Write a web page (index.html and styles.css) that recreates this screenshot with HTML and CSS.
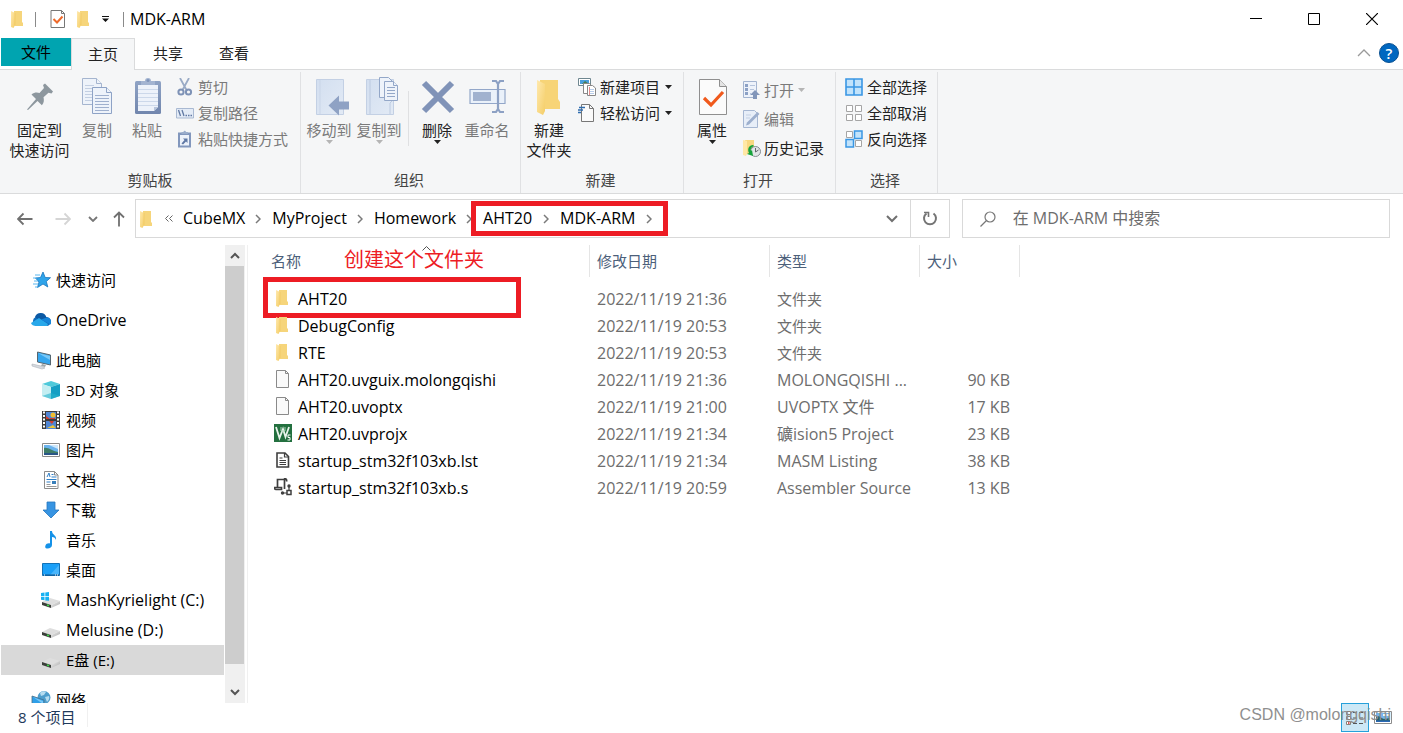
FILE: index.html
```html
<!DOCTYPE html>
<html lang="zh-CN">
<head>
<meta charset="utf-8">
<title>MDK-ARM</title>
<link rel="stylesheet" href="styles.css">
</head>
<body>
<svg class="defs" aria-hidden="true">
  <defs>
    <linearGradient id="g-drive" x1="0" y1="0" x2="1" y2="1"><stop offset="0" stop-color="#f2f2f2"/><stop offset="1" stop-color="#a9a9a9"/></linearGradient>
    <linearGradient id="g-clip" x1="0" y1="0" x2="0" y2="1"><stop offset="0" stop-color="#8fa3c5"/><stop offset="1" stop-color="#7186ad"/></linearGradient>
    <linearGradient id="g-fold" x1="0" y1="0" x2="1" y2="1"><stop offset="0" stop-color="#ffe9ae"/><stop offset="1" stop-color="#f4cd66"/></linearGradient>
    <linearGradient id="g-book" x1="0" y1="0" x2="1" y2="1"><stop offset="0" stop-color="#d3dff0"/><stop offset="1" stop-color="#e2eaf5"/></linearGradient>
    <symbol id="folder" viewBox="0 0 18 18"><path d="M5 1h8v11l1 1v3H5z" fill="#f6d57b"/><path d="M2 1l4 2v12l-1.500 3L2 17z" fill="url(#g-fold)"/><path d="M6 3v12" stroke="#f0c75d" stroke-width=".6"/></symbol>
    <symbol id="sheet" viewBox="0 0 18 18"><path d="M2.500.500h9l3 3v14h-12z" fill="#fafafa" stroke="#8a8a8a"/><path d="M11.500.500v3h3" fill="none" stroke="#8a8a8a"/></symbol>
    <symbol id="drive" viewBox="0 0 20 12"><path d="M1 5l8-4 10 3-9 4z" fill="#dedede"/><path d="M1 5l9 3v3L1 8z" fill="#3b3f3b"/><path d="M10 8l9-4v3l-9 4z" fill="url(#g-drive)"/><path d="M6 8l2 .7" stroke="#3fd64a" stroke-width="1.500"/></symbol>
    <symbol id="tri" viewBox="0 0 7 4"><path d="M0 0h7L3.500 4z" fill="currentColor"/></symbol>
    <symbol id="chev" viewBox="0 0 6 10"><path d="M1 1l4 4-4 4" fill="none" stroke="#7a7a7a" stroke-width="1.500"/></symbol>
  </defs>
</svg>

<div class="window">
  <header class="titlebar">
    <svg class="i18" viewBox="0 0 18 18"><use href="#folder"/></svg>
    <span class="bar"></span>
    <svg class="i18 qa-check" viewBox="0 0 18 18"><path d="M2 .5h10.500l3 3V17.500H2z" fill="#fff" stroke="#777"/><path d="M12.500.5v3h3" fill="none" stroke="#777"/><path d="M4.500 9l3.500 3.500 5.500-6" fill="none" stroke="#ee6a2b" stroke-width="2"/></svg>
    <svg class="i18 qa-folder" viewBox="0 0 18 18"><use href="#folder"/></svg>
    <button class="plain qa-more" aria-label="自定义快速访问工具栏"><svg width="7" height="6" viewBox="0 0 7 6"><path d="M0 0h7v1H0zM0 2.500h7L3.500 6z" fill="#111"/></svg></button>
    <span class="bar"></span>
    <h1 class="title">MDK-ARM</h1>
    <div class="wincontrols">
      <button class="plain" aria-label="最小化"><svg width="12" height="12" viewBox="0 0 12 12"><path d="M0 5.500h12" stroke="#000"/></svg></button>
      <button class="plain" aria-label="最大化"><svg width="12" height="12" viewBox="0 0 12 12"><path d="M.5.500h11v11H.5z" fill="none" stroke="#000"/></svg></button>
      <button class="plain" aria-label="关闭"><svg width="12" height="12" viewBox="0 0 12 12"><path d="M0 0l12 12M12 0L0 12" stroke="#000" stroke-width="1.200"/></svg></button>
    </div>
  </header>

  <div class="tabs">
    <button class="tab file">文件</button>
    <button class="tab active">主页</button>
    <button class="tab">共享</button>
    <button class="tab">查看</button>
    <div class="tabs-right">
      <button class="plain" aria-label="最小化功能区"><svg width="14" height="8" viewBox="0 0 14 8"><path d="M1 7l6-6 6 6" fill="none" stroke="#9a9a9a" stroke-width="1.300"/></svg></button>
      <button class="plain help" aria-label="帮助">?</button>
    </div>
  </div>

  <div class="ribbon">
    <section class="group g-clip">
      <div class="tools">
        <button class="big w-pin"><svg width="40" height="40" viewBox="0 0 40 40"><path transform="translate(-1 1)" d="M8 31.500l9-10.500-4.500-4.500c3-2.500 6-2 8-1.500l4.500-5-1-3 2-1.500 8 8-1.500 2-3-.8-5 4.600c.6 2.500.8 5.500-1.600 8L18.500 23 9 32z" fill="#8d979e"/></svg><span>固定到<br>快速访问</span></button>
        <button class="big off w-copy"><svg width="40" height="40" viewBox="0 0 40 40"><g fill="#eef3fa" stroke="#a5b5cf"><path d="M5.500 1.500h14l5 5v21h-19z"/><path d="M19.500 1.500v5h5" /><path d="M8 8.500h9M8 11.500h9M8 14.500h9M8 17.500h9M8 20.500h9M8 23.500h9" stroke="#c3cfe2"/><path d="M15.500 10.500h14l5 5v21h-19z" stroke="#8ea3c6"/><path d="M29.500 10.500v5h5" stroke="#8ea3c6"/><path d="M18 18.500h14M18 21.500h14M18 24.500h14M18 27.500h14M18 30.500h14M18 33.500h14" stroke="#9fb0ce"/></g></svg><span>复制</span></button>
        <button class="big off w-paste"><svg width="40" height="40" viewBox="0 0 40 40"><rect x="8" y="4" width="26" height="33" rx="1.500" fill="url(#g-clip)"/><path d="M11 8h20v22l-4 4H11z" fill="#edf2fa"/><path d="M11 12.500h20M11 16.500h20M11 20.500h20M11 24.500h20M11 28.500h20" stroke="#ccd8ea"/><path d="M27 34v-4h4z" fill="#b7c5dc"/><path d="M14 8V4h4a3 3 0 0 1 6 0h4v4z" fill="#a3b4d1"/><circle cx="21" cy="3.500" r="1.500" fill="#7f94b9"/></svg><span>粘贴</span></button>
        <div class="list">
          <button class="small off"><svg class="i18" viewBox="0 0 18 18"><path d="M4 0l6.500 12M13 0L6.500 12" stroke="#9aabc6" stroke-width="1.800"/><circle cx="5" cy="14" r="2.600" fill="none" stroke="#7e92b6" stroke-width="2"/><circle cx="12.500" cy="14" r="2.600" fill="none" stroke="#7e92b6" stroke-width="2"/></svg>剪切</button>
          <button class="small off"><svg class="i18" viewBox="0 0 18 18"><path d="M.5 4.500h17v9.500H.5z" fill="#e3ebf6" stroke="#a9b9d2"/><path d="M2.500 6l2 6M6 6l2 6M9.500 11.500h1.500M12 11.500h1.500M14.500 11.500h1.500" stroke="#6179a3" stroke-width="1.300"/></svg>复制路径</button>
          <button class="small off"><svg class="i18" viewBox="0 0 18 18"><rect x="2" y="2.500" width="13" height="15" fill="#8297bd"/><path d="M4 5h9v10.500H4z" fill="#edf2fa"/><path d="M5.500 4V2h2a1.200 1.200 0 0 1 2.400 0h2v2z" fill="#9aadcb"/><path d="M5.500 13.500l3-3.500-1.500-1.500h4.500v4.500L10 11.500l-3 3z" fill="#5f78a5"/></svg>粘贴快捷方式</button>
        </div>
      </div>
      <h2>剪贴板</h2>
    </section>
    <section class="group g-org">
      <div class="tools">
        <button class="big off"><svg width="40" height="40" viewBox="0 0 40 40"><path d="M7.500 2.500h27v35h-27z" fill="url(#g-book)" stroke="#c3d0e4"/><path d="M11 3v34" stroke="#c9d5e8"/><path d="M19.500 28.500L30 18.500v6h10v8H30v6z" fill="#8fa2c4"/></svg><span>移动到</span><svg class="tri"><use href="#tri"/></svg></button>
        <button class="big off"><svg width="40" height="40" viewBox="0 0 40 40"><path d="M7.500 2.500h27v35h-27z" fill="url(#g-book)" stroke="#c3d0e4"/><path d="M11 3v34M31 37V26l3-3" stroke="#bccae0" fill="none"/><g fill="#eef3fa" stroke="#93a7c8"><path d="M20.500.5h9l4 4v16h-13z"/><path d="M25.500 4.500h9l4 4v15h-13z"/><path d="M34.500 4.500v4h4M28 10.500h8M28 13.500h8M28 16.500h8M28 19.500h8"/></g></svg><span>复制到</span><svg class="tri"><use href="#tri"/></svg></button>
        <span class="rule"></span>
        <button class="big"><svg width="40" height="40" viewBox="0 0 40 40"><path d="M7 7l28 28M35 7L7 35" transform="translate(0 -1)" stroke="#8093b8" stroke-width="6"/></svg><span>删除</span><svg class="tri"><use href="#tri"/></svg></button>
        <button class="big off"><svg width="40" height="40" viewBox="0 0 40 40"><path d="M3 12.500h35v14H3z" fill="#eaf1fa" stroke="#93a7c9" stroke-width="1.200"/><path d="M6 15h18v9H6z" fill="#a1b2cf"/><path d="M25 4h4l2 3 2-3h4M25 35h4l2-3 2 3h4M31 6v27" fill="none" stroke="#8da1c4" stroke-width="2.200"/></svg><span>重命名</span></button>
      </div>
      <h2>组织</h2>
    </section>
    <section class="group g-new">
      <div class="tools">
        <button class="big"><svg width="40" height="40" viewBox="0 0 40 40"><path d="M11 3h18v19l2 3v7H11z" fill="#f7d477"/><path d="M8 3l8 4v27l-2 4-6-3z" fill="url(#g-fold)"/></svg><span>新建<br>文件夹</span></button>
        <div class="list">
          <button class="small"><svg class="i18" viewBox="0 0 18 18"><path d="M.5.500h12v7H.5z" fill="#fff" stroke="#6f8790"/><path d="M2 2h9v4H2z" fill="#4b9edc"/><path d="M4 6l3-3 4 3z" fill="#447c53"/><path d="M5.500 5.500h6l2 2v8h-8z" fill="#fff" stroke="#888"/><path d="M9.500 7.500h5l3 2.500v7.500h-8z" fill="#fff" stroke="#888"/><path d="M11 11.500h5M11 13.500h5M11 15.500h5" stroke="#b8cdea"/><path d="M11.500 9v8" stroke="#e58b8b"/></svg>新建项目<svg class="tri"><use href="#tri"/></svg></button>
          <button class="small"><svg class="i18" viewBox="0 0 18 18"><path d="M3.500.5h8l4 4v13h-12z" fill="#fafafa" stroke="#777"/><path d="M11.500.5v4h4" fill="none" stroke="#777"/><path d="M1 3.500h6M0 6h5M0 8.500h3" stroke="#2f6cae" stroke-width="1.300"/></svg>轻松访问<svg class="tri"><use href="#tri"/></svg></button>
        </div>
      </div>
      <h2>新建</h2>
    </section>
    <section class="group g-open">
      <div class="tools">
        <button class="big w-prop"><svg width="40" height="40" viewBox="0 0 40 40"><path d="M7.500 2.500h20l7 7v28h-27z" fill="#fbfbfb" stroke="#8f8f8f"/><path d="M27.500 2.500v7h7" fill="#e4e4e4" stroke="#8f8f8f"/><path d="M12 21l7 7 12-13" fill="none" stroke="#f0591c" stroke-width="3.200"/></svg><span>属性</span><svg class="tri"><use href="#tri"/></svg></button>
        <div class="list loose">
          <button class="small off"><svg class="i18" viewBox="0 0 18 18"><path d="M.5.500h13v16H.5z" fill="#edf2fa" stroke="#a3b4d0"/><path d="M2 3h3v3H2zM2 7h3v3H2zM2 11h3v3H2z" fill="#8ca1c5"/><path d="M7 4.500h5M7 8.500h4M7 12.500h1" stroke="#b5c4dc"/><path d="M12 9l5 5h-3v4h-4v-4H7z" fill="#8296ba"/></svg>打开<svg class="tri"><use href="#tri"/></svg></button>
          <button class="small off"><svg class="i18" viewBox="0 0 18 18"><path d="M.5.500h11l3 3v14H.5z" fill="#e7eef8" stroke="#a6b7d2"/><path d="M3 5h5M3 8h4" stroke="#c3d0e3"/><path d="M3 15.500l1-3L14.500 2l2 2L6 14.500z" fill="#9cafcd"/></svg>编辑</button>
          <button class="small"><svg class="i18" viewBox="0 0 18 18"><path d="M2 1h9v14H4z" fill="#f8d880"/><path d="M0 1l4 1v13l-1 2-3-1z" fill="#ffe8a6"/><circle cx="12.500" cy="12.500" r="5" fill="#e1e5e7" stroke="#858c91"/><path d="M12.500 9v4l3-2" fill="none" stroke="#61686c"/><path d="M10 6c-4 0-6 4-4 8l-2 1 6 2-1-6-1 1c-1-2 0-4 3-5z" fill="#16a33b"/></svg>历史记录</button>
        </div>
      </div>
      <h2>打开</h2>
    </section>
    <section class="group g-sel">
      <div class="tools">
        <div class="list">
          <button class="small"><svg class="i18" viewBox="0 0 18 18"><path d="M1 1h16v16H1zM9 1v16M1 9h16" fill="#c2e3fb" stroke="#3a97e4" stroke-width="1.600"/></svg>全部选择</button>
          <button class="small"><svg class="i18" viewBox="0 0 18 18"><path d="M1.500 1.500h6v6h-6zM10.500 1.500h6v6h-6zM1.500 10.500h6v6h-6zM10.500 10.500h6v6h-6z" fill="#fff" stroke="#a5a5a5"/></svg>全部取消</button>
          <button class="small"><svg class="i18" viewBox="0 0 18 18"><path d="M1.500 1.500h6v6h-6zM10.500 10.500h6v6h-6z" fill="#fff" stroke="#a5a5a5"/><path d="M9.500 1h7.500v7.500H9.500zM1 9.500h7.500V17H1z" fill="#c2e3fb" stroke="#3a97e4" stroke-width="1.500"/></svg>反向选择</button>
        </div>
      </div>
      <h2>选择</h2>
    </section>
  </div>

  <div class="nav">
    <div class="arrows">
      <button class="plain" aria-label="后退"><svg width="16" height="14" viewBox="0 0 16 14"><path d="M6.500 1.500L1 7l5.500 5.500M1 7H15.500" fill="none" stroke="#707070" stroke-width="1.800"/></svg></button>
      <button class="plain fwd" aria-label="前进"><svg width="16" height="14" viewBox="0 0 16 14"><path d="M9.500 1.500L15 7l-5.500 5.500M15 7H.5" fill="none" stroke="#d5d5d5" stroke-width="1.800"/></svg></button>
      <button class="plain" aria-label="最近浏览的位置"><svg width="10" height="6" viewBox="0 0 10 6"><path d="M1 1l4 4 4-4" fill="none" stroke="#767676" stroke-width="1.800"/></svg></button>
      <button class="plain" aria-label="上移"><svg width="12" height="16" viewBox="0 0 12 16"><path d="M1 6.500l5-5 5 5M6 1.500V15.500" fill="none" stroke="#707070" stroke-width="1.800"/></svg></button>
    </div>
    <div class="address">
      <svg class="i18" viewBox="0 0 18 18"><use href="#folder"/></svg>
      <svg class="dbl" width="8" height="7" viewBox="0 0 8 7"><path d="M3.500.5l-3 3 3 3M7.500.5l-3 3 3 3" fill="none" stroke="#666"/></svg>
      <a href="#">CubeMX</a><svg class="chev"><use href="#chev"/></svg>
      <a href="#">MyProject</a><svg class="chev"><use href="#chev"/></svg>
      <a href="#">Homework</a><svg class="chev"><use href="#chev"/></svg>
      <span class="marked"><a href="#">AHT20</a><svg class="chev"><use href="#chev"/></svg><a href="#">MDK-ARM</a><svg class="chev"><use href="#chev"/></svg></span>
      <button class="plain drop" aria-label="以前的位置"><svg width="12" height="8" viewBox="0 0 12 8"><path d="M1 1l5 5 5-5" fill="none" stroke="#707070" stroke-width="2"/></svg></button>
      <button class="plain refresh" aria-label="刷新"><svg width="16" height="16" viewBox="0 0 16 16"><path d="M11.500 2.500a6 6 0 1 1-7 0" fill="none" stroke="#747474" stroke-width="2"/><path d="M2 1.500h4.500V6" fill="none" stroke="#747474" stroke-width="1.600"/></svg></button>
    </div>
    <label class="search">
      <svg width="16" height="16" viewBox="0 0 16 16"><circle cx="10" cy="6" r="5" fill="none" stroke="#777" stroke-width="1.200"/><path d="M6.500 9.500L.5 15.500" stroke="#777" stroke-width="1.200"/></svg>
      <input type="text" placeholder="在 MDK-ARM 中搜索" aria-label="搜索">
    </label>
  </div>

  <main class="body">
    <nav class="side">
      <a class="top" href="#"><svg viewBox="0 0 20 20"><path d="M12 2l2.200 5.500 5.300.2-4.200 3.700 1.500 5.600L12 14l-5.500 3.500L8 12 4.500 8l5-.5z" fill="#2fa4ea" stroke="#1674bd" stroke-width=".8"/><path d="M4 5h5M2 8h4M3 11h4M2 14h5M4 17h3" stroke="#58b6ef"/></svg>快速访问</a>
      <a class="top" href="#"><svg viewBox="0 0 20 20"><path d="M5 16a5 5 0 0 1-.5-9A6 6 0 0 1 15 7a4.500 4.500 0 0 1 1 9z" fill="#0f6cbd"/><path d="M4 7a6 6 0 0 1 11.500.5L9 11z" fill="#0c59a4"/><path d="M0 13l8-5 9 6-1 2H5c-2.500 0-4.500-1-5-3z" fill="#28a8ea"/><path d="M10 9.500l6-2a4.500 4.500 0 0 1 3.500 7z" fill="#1685d9"/></svg><span class="latin">OneDrive</span></a>
      <a class="top pc" href="#"><svg viewBox="0 0 20 20"><path d="M6.500 2l13 3v10l-13-3z" fill="#35a6ee" stroke="#55656f"/><path d="M7 3l12 7V6z" fill="#79c8f7"/><path d="M11 14l4 1-1 2-4-1z" fill="#9fa6aa"/><path d="M1 14l9 2 4 2-3 1-10-3z" fill="#d6dae0" stroke="#adb4bb" stroke-width=".6"/></svg>此电脑</a>
      <a href="#"><svg viewBox="0 0 20 20"><path d="M1 4l9-3 9 3-9 3z" fill="#4fc9da"/><path d="M1 4l9 3v12l-9-3z" fill="#c4eef2"/><path d="M19 4l-9 3v12l9-3z" fill="#169fc4"/><path d="M10 13l9 3-9 3-9-3z" fill="#28b4cd" opacity=".6"/></svg>3D 对象</a>
      <a href="#"><svg viewBox="0 0 20 20"><path d="M1 1h18v18H1z" fill="#3c3c3c"/><path d="M5 2h10v7H5zM5 11h10v8H5z" fill="#4f86d5"/><circle cx="12" cy="5" r="2.500" fill="#f1bd2e"/><path d="M5 6l4 3H5zM9 8h5v1H9zM8 11h5l-2 3z" fill="#d43c2d"/><path d="M6 18h9l-3-3z" fill="#e8c43a"/><path d="M3 1.500v17M17 1.500v17" stroke="#fff" stroke-width="2" stroke-dasharray="2 1.500"/></svg>视频</a>
      <a href="#"><svg viewBox="0 0 20 20"><path d="M1.500 3.500h17v13h-17z" fill="#fff" stroke="#8b8b8b"/><path d="M3 5h14v10H3z" fill="#6ab3ee"/><path d="M8 5h9v4z" fill="#cce6fa"/><path d="M3 8c4-1 8 3 14 4v3H3z" fill="#3f7d68"/><path d="M3 13h14v2H3z" fill="#2a5688"/></svg>图片</a>
      <a href="#"><svg viewBox="0 0 20 20"><path d="M3.500 1.500h10l3.500 3.500v13.500H3.500z" fill="#fff" stroke="#8b8b8b"/><path d="M13.500 1.500V5H17" fill="none" stroke="#8b8b8b"/><path d="M6 7l2-4 1 4M10.500 4.500h2M10.500 7h5M5.500 9.500h10M5.500 12h4" fill="none" stroke="#2f7fc7"/><path d="M5.500 14.500h4M5.500 16.500h10" stroke="#999"/><path d="M11 11h4v3h-4z" fill="#397fba"/></svg>文档</a>
      <a href="#"><svg viewBox="0 0 20 20"><path d="M6 2h8v8h4l-8 8-8-8h4z" fill="#3794e2" stroke="#2676bf" stroke-width=".8"/></svg>下载</a>
      <a href="#"><svg viewBox="0 0 20 20"><path d="M9 1h2c0 4 5 4 4 9-.6-2-2-3-4-3v8c0 2-2 3.500-4.500 3.500S4 17 4.500 15.500 7 13 9 13.500z" fill="#1592e8"/></svg>音乐</a>
      <a href="#"><svg viewBox="0 0 20 20"><path d="M1.500 3.500h17v12h-17z" fill="#1ba0f8" stroke="#1272b8"/><path d="M9 15l9-10v10z" fill="#49b5fb"/><path d="M2 15h16" stroke="#0c548f"/><path d="M3 15h1M14 15h1M16 15h1" stroke="#fff"/></svg>桌面</a>
      <a href="#"><svg viewBox="0 0 20 20"><use href="#drive" y="7" width="20" height="12"/><path d="M0 3l3.500-.5V6H0zM4.300 2.400L8 2v4H4.300zM0 6.800h3.500v3.500L0 9.800zM4.300 6.800H8v4l-3.700-.4z" fill="#17b1f2"/></svg><span class="latin">MashKyrielight (C:)</span></a>
      <a href="#"><svg viewBox="0 0 20 20"><use href="#drive" y="7" width="20" height="12"/></svg><span class="latin">Melusine (D:)</span></a>
      <a class="current" href="#"><svg viewBox="0 0 20 20"><use href="#drive" y="7" width="20" height="12"/></svg>E盘 (E:)</a>
      <a class="top net" href="#"><svg viewBox="0 0 20 20"><circle cx="13" cy="7.500" r="6.500" fill="#4d9dcc"/><path d="M9 3c2-2 5-2 6-1l-2 3-3 1zM14 7l4-1c1 3-1 5-2 6z" fill="#b5dcf0"/><path d="M1 6l12 4v9L1 16z" fill="#2f9fe8" stroke="#4c6f86" stroke-width=".8"/><path d="M2 7l10 4v3z" fill="#79c8f7"/></svg>网络</a>
    </nav>
    <div class="scroll">
      <button class="plain" aria-label="向上滚动"><svg width="10" height="7" viewBox="0 0 10 7"><path d="M1 6l4-4 4 4" fill="none" stroke="#555" stroke-width="2"/></svg></button>
      <div class="thumb"></div>
      <button class="plain down" aria-label="向下滚动"><svg width="10" height="7" viewBox="0 0 10 7"><path d="M1 1l4 4 4-4" fill="none" stroke="#555" stroke-width="2"/></svg></button>
    </div>
    <div class="files">
      <table>
        <colgroup><col class="c-name"><col class="c-date"><col class="c-type"><col class="c-size"></colgroup>
        <thead><tr>
          <th class="h-name"><div>名称</div><svg class="sort" width="9" height="5" viewBox="0 0 9 5"><path d="M.5 4.500l4-4 4 4" fill="none" stroke="#555"/></svg><span class="note">创建这个文件夹</span></th>
          <th><div>修改日期</div></th><th><div>类型</div></th><th><div>大小</div></th>
        </tr></thead>
        <tbody>
          <tr><td class="picked"><svg class="i18" viewBox="0 0 18 18"><use href="#folder"/></svg>AHT20</td><td>2022/11/19 21:36</td><td class="cjk">文件夹</td><td></td></tr>
          <tr><td><svg class="i18" viewBox="0 0 18 18"><use href="#folder"/></svg>DebugConfig</td><td>2022/11/19 20:53</td><td class="cjk">文件夹</td><td></td></tr>
          <tr><td><svg class="i18" viewBox="0 0 18 18"><use href="#folder"/></svg>RTE</td><td>2022/11/19 20:53</td><td class="cjk">文件夹</td><td></td></tr>
          <tr><td><svg class="i18" viewBox="0 0 18 18"><use href="#sheet"/></svg>AHT20.uvguix.molongqishi</td><td>2022/11/19 21:36</td><td>MOLONGQISHI ...</td><td>90 KB</td></tr>
          <tr><td><svg class="i18" viewBox="0 0 18 18"><use href="#sheet"/></svg>AHT20.uvoptx</td><td>2022/11/19 21:00</td><td>UVOPTX 文件</td><td>17 KB</td></tr>
          <tr><td><svg class="i18" viewBox="0 0 18 18"><path d="M0 0h18v18H0z" fill="#23703f"/><path d="M2 3l3.500 11L9 5l2.500 8L15 3" fill="none" stroke="#e9f4ec" stroke-width="1.800"/><path d="M7 3v4h4V3" fill="none" stroke="#a9d2b6"/><path d="M16.500 11H14v2.500h2V16h-2.500" fill="none" stroke="#fff"/></svg>AHT20.uvprojx</td><td>2022/11/19 21:34</td><td>礦ision5 Project</td><td>23 KB</td></tr>
          <tr><td><svg class="i18" viewBox="0 0 18 18"><path d="M3 2h8l3.500 3.500V16H3z" fill="#fff" stroke="#3f3f3f" stroke-width="1.600"/><path d="M10.500 2v4h4M5.500 7h3M5.500 9.500h6.500M5.500 11.500h6.500M5.500 13.500h6.500" fill="none" stroke="#3f3f3f" stroke-width="1.200"/></svg>startup_stm32f103xb.lst</td><td>2022/11/19 21:34</td><td>MASM Listing</td><td>38 KB</td></tr>
          <tr><td><svg class="i18" viewBox="0 0 18 18"><path d="M3.500 10V1.500h8M10.500 1.500V11M0 9.500h7.500v2H2c-1 0-1.500-1-1.500-2M10 1c2-1 3 1 2.500 2.500" fill="none" stroke="#3f3f3f" stroke-width="1.700"/><path d="M15 7v5M9 15h4" stroke="#3f3f3f" stroke-width="1.200"/><path d="M13 12.500h4v4h-4z" fill="#fff" stroke="#3f3f3f" stroke-width="1.500"/><circle cx="15" cy="8" r="1.700" fill="#3f3f3f"/><circle cx="8.500" cy="15" r="1.700" fill="#3f3f3f"/></svg>startup_stm32f103xb.s</td><td>2022/11/19 20:59</td><td>Assembler Source</td><td>13 KB</td></tr>
        </tbody>
      </table>
    </div>
  </main>

  <footer class="status">
    <span class="count">8 个项目</span>
    <div class="views">
      <button class="plain on" aria-label="详细信息"><svg width="18" height="16" viewBox="0 0 18 16"><path d="M.5 1.500h4v3h-4zM.5 6.500h4v3h-4zM.5 11.500h4v3h-4z" fill="#fff" stroke="#8b8078"/><path d="M2 13h1.500" stroke="#c22" stroke-width="1.500"/><path d="M7 2.500h4M13 2.500h4M7 8h4M13 8h4M7 13.500h4M13 13.500h4" stroke="#555"/></svg></button>
      <button class="plain" aria-label="大图标"><svg width="18" height="13" viewBox="0 0 18 13"><path d="M.5.500h17v12H.5z" fill="#fff" stroke="#8c8c8c"/><path d="M2 2h14v9H2z" fill="#76b5ec"/><path d="M9 3h6v2H9z" fill="#eaf5fd"/><path d="M2 6c4-2 4 1 8 2l6-1v4H2z" fill="#25606b"/><path d="M2 9.500h14V11H2z" fill="#2b68b5"/></svg></button>
    </div>
    <span class="mark">CSDN @molongqishi</span>
  </footer>
</div>
</body>
</html>
```
FILE: styles.css
```css
*, *::before, *::after { box-sizing: border-box; }

body {
  margin: 0;
  font-family: "Open Sans", "Noto Sans CJK SC", sans-serif;
  font-size: 15px;
  line-height: 20px;
  color: #000;
  background: #fff;
}

button, input { font: inherit; color: inherit; }
button { padding: 0; border: 0; background: none; }
a { color: inherit; text-decoration: none; }
h1, h2 { margin: 0; font-weight: 400; font-size: 15px; }
svg { flex: none; display: block; }

.defs { position: absolute; width: 0; height: 0; }
.i18 { width: 18px; height: 18px; }
.plain { display: flex; align-items: center; justify-content: center; }
.tri { width: 7px; height: 4px; }
.chev { width: 6px; height: 10px; }
.latin { font-size: 16px; }

.window { display: flex; flex-direction: column; height: 100vh; overflow: hidden; }

/* Title bar */
.titlebar { display: flex; align-items: center; height: 38px; padding-left: 9px; }
.bar { width: 1px; height: 15px; background: #8a8a8a; margin-left: 8px; }
.qa-check { margin-left: 13px; }
.qa-folder { margin-left: 8px; }
.qa-more { width: 20px; height: 20px; margin-left: 2px; }
.title { margin-left: 6px; font-size: 16px; }
.wincontrols { display: flex; margin-left: auto; padding-right: 2px; }
.wincontrols button { width: 58px; height: 38px; }

/* Tabs */
.tabs { display: flex; height: 32px; padding-left: 1px; border-bottom: 1px solid #dadbdc; }
.tab { height: 31px; width: 66px; padding-bottom: 2px; color: #222; }
.tab.file { width: 70px; height: 28px; padding-bottom: 0; background: #00a4b0; color: #000; }
.tab.active { width: 64px; height: 32px; border: 1px solid #dadbdc; border-bottom: 0; background: #f5f6f7; }
.tabs-right { display: flex; align-items: center; gap: 8px; margin-left: auto; padding: 0 4px 2px 0; }
.help { width: 20px; height: 20px; border-radius: 50%; background: #0067c0; border: 1px solid #0a5192; color: #fff; font-weight: 600; }

/* Ribbon */
.ribbon { display: flex; height: 124px; padding-top: 2px; background: #f5f6f7; border-bottom: 1px solid #dadbdc; }
.group { display: flex; flex-direction: column; height: 121px; border-right: 1px solid #e0e1e3; }
.group h2 { padding-right: 3px; text-align: center; color: #444; }
.tools { display: flex; align-items: flex-start; height: 98px; padding: 5px 3px 0; }
.g-clip { width: 301px; }
.g-clip .tools { padding-left: 7px; }
.g-clip h2 { padding-right: 0; }
.g-org { width: 220px; }
.g-new { width: 163px; }
.g-open { width: 152px; }
.g-sel { width: 102px; }
.g-sel .tools { padding-left: 5px; }
.big { display: flex; flex-direction: column; align-items: center; flex: none; width: 50px; color: #222; white-space: nowrap; }
.big > span { margin-top: 3px; }
.w-pin { width: 65px; }
.off { color: #7a7a7a; }
.off .tri { color: #b5b5b5; }
.rule { width: 1px; height: 55px; margin: 14px 3px 0 4px; background: #dfe0e2; }
.list { display: flex; flex-direction: column; margin-top: -3px; padding-left: 4px; }
.small { display: flex; align-items: center; gap: 4px; height: 26px; white-space: nowrap; color: #222; }
.small.off { color: #7a7a7a; }
.small .tri { margin-left: 1px; }
.list.loose { margin-top: -2px; padding-left: 6px; }
.list.loose .small { height: 29px; gap: 3px; }

/* Address row */
.nav { display: flex; align-items: center; height: 51px; padding: 0 13px 2px 0; }
.arrows { display: flex; align-items: center; gap: 17px; flex: none; width: 135px; padding-left: 17px; }
.arrows .fwd { margin-left: 5px; }
.arrows button:last-child { margin-left: -2px; }
.address { display: flex; align-items: center; flex: 810 1 0; height: 39px; border: 1px solid #d9d9d9; padding-left: 2px; font-size: 16px; }
.address a { padding-bottom: 2px; }
.dbl { margin: 0 10px 0 9px; }
.address .chev { margin: 0 11px 0 10px; }
.marked { display: flex; align-items: center; height: 35px; margin-left: -12px; padding-left: 7px; border: 5px solid #ed1c24; }
.address .marked .chev { margin: 0 11px; }
.drop { width: 36px; height: 37px; margin-left: auto; }
.refresh { width: 39px; height: 37px; border-left: 1px solid #d9d9d9; }
.search { display: flex; align-items: center; gap: 17px; flex: 409 1 0; height: 39px; margin-left: 12px; padding-left: 17px; border: 1px solid #d9d9d9; }
.search input { flex: 1; min-width: 0; border: 0; outline: 0; padding: 0 0 2px; background: none; font-size: 16px; }
.search input::placeholder { color: #6d6d6d; opacity: 1; }

/* Navigation pane */
.body { display: flex; flex: 1; min-height: 0; overflow: hidden; }
.side { width: 225px; flex: none; padding: 20px 1px 0; overflow: hidden; }
.side a { display: flex; align-items: center; flex: none; gap: 5px; height: 30px; padding-left: 40px; white-space: nowrap; }
.side a svg { width: 20px; height: 20px; }
.side a.top { margin-bottom: 10px; padding-left: 30px; }
.side a.pc { margin-bottom: 0; }
.side a.net { margin-top: 10px; }
.side a.current { background: #d9d9d9; }
.scroll { display: flex; flex-direction: column; flex: none; width: 20px; background: #f0f0f0; }
.scroll button { height: 21px; flex: none; padding-right: 1px; }
.thumb { flex: 1; background: #cdcdcd; margin-right: 1px; }
.scroll .down { margin-top: 18px; }

/* File list */
.files { flex: 1; min-width: 0; margin-left: 2px; border-left: 1px solid #f0f0f0; }
table { table-layout: fixed; width: 772px; border-collapse: collapse; }
.c-name { width: 342px; }
.c-date { width: 180px; }
.c-type { width: 150px; }
.c-size { width: 100px; }
th { height: 40px; padding: 0; vertical-align: top; text-align: left; font-weight: 400; color: #4c607a; }
th > div { height: 32px; padding: 6px 7px; border-right: 1px solid #e5e5e5; }
.h-name { position: relative; }
.h-name > div { padding-left: 23px; }
.sort { position: absolute; left: 174px; top: 1px; }
.note { position: absolute; left: 96px; top: 3px; font-size: 20px; line-height: 24px; color: #ed1c24; }
td { height: 27px; padding: 0 7px; white-space: nowrap; font-size: 16px; color: #6d6d6d; }
td.cjk { font-size: 15px; }
td:first-child { position: relative; padding-left: 50px; color: #000; }
td .i18 { position: absolute; left: 26px; top: 4px; }
td:last-child { text-align: right; padding-right: 10px; }
.picked::after { content: ""; position: absolute; left: 15px; top: -8px; width: 258px; height: 41px; border: 5px solid #ed1c24; }

/* Status bar */
.status { position: relative; display: flex; justify-content: space-between; flex: none; height: 30px; padding-right: 9px; }
.count { height: 24px; padding: 4px 12px 0 18px; border-right: 1px solid #f0f0f0; color: #1e395b; }
.views { display: flex; gap: 3px; }
.views button { width: 22px; height: 29px; }
.views .on { width: 28px; background: #cce8f6; border: 1px solid #26a0da; }
.mark { position: absolute; right: 12px; top: 2px; font-family: "Liberation Sans", Arial, sans-serif; font-size: 16px; color: #8f8f8f; }
```
